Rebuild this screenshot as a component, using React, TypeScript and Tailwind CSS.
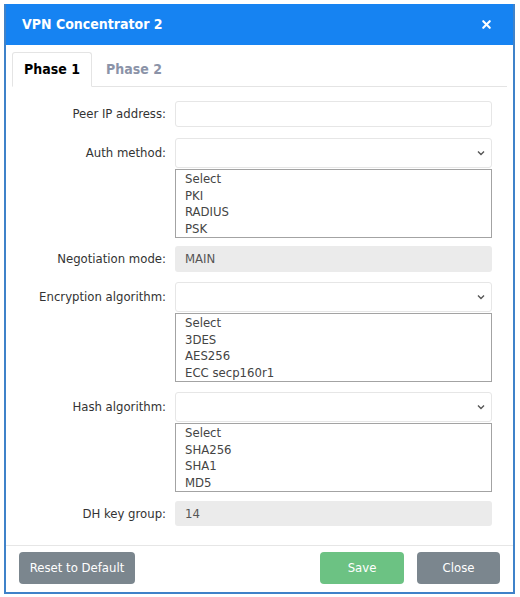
import { X } from 'lucide-react'

type ListProps = { items: string[] }

function Chevron() {
    return (
        <svg width="10" height="10" viewBox="0 0 10 10" className="text-[#555]">
            <path d="M2 3.5 L5 6.5 L8 3.5" fill="none" stroke="currentColor" strokeWidth="1.4" />
        </svg>
    )
}

function Row({ label, children, className = '', lh = 'leading-[26px]' }: { label: string; children: React.ReactNode; className?: string; lh?: string }) {
    return (
        <div className={`flex items-start ${className}`}>
            <div className={`w-[160px] shrink-0 text-right text-[13px] text-[#333] ${lh}`}>{label}</div>
            <div className="ml-[9px] w-[317px]">{children}</div>
        </div>
    )
}

function SelectBox() {
    return (
        <div className="flex h-[30px] items-center justify-end rounded-[3px] border border-[#e6e6e6] bg-white pr-[5px]">
            <Chevron />
        </div>
    )
}

function ListBox({ items }: ListProps) {
    return (
        <div className="mt-[1px] h-[69px] border border-[#a3a3a3] bg-white pl-[9px] pt-[1px] text-[13px] leading-[16.5px] text-[#444]">
            {items.map((it) => (
                <div key={it}>{it}</div>
            ))}
        </div>
    )
}

export default function App() {
    return (
        <div className="min-h-screen bg-white pt-[4px] pl-[4px]" style={{ fontFamily: '"DejaVu Sans Condensed", "Liberation Sans", sans-serif' }}>
            <div className="w-[511px] border-x-2 border-b-2 border-[#3f82c9] bg-white">
                <div className="flex h-[41px] items-center justify-between bg-[#1683f2] pl-[16px] pr-[20px]">
                    <span className="text-[14px] font-bold text-white">VPN Concentrator 2</span>
                    <X className="h-[13px] w-[13px] text-white" strokeWidth={4} />
                </div>

                <div className="mx-[6px] mt-[7px] flex border-b border-[#e4e4e4]">
                    <div className="-mb-px flex h-[35px] w-[80px] items-center justify-center rounded-t-[3px] border border-b-white border-[#e4e4e4] bg-white text-[14px] font-bold text-black">
                        Phase 1
                    </div>
                    <div className="flex h-[34px] w-[84px] items-center justify-center text-[14px] font-bold text-[#8b93a8]">
                        Phase 2
                    </div>
                </div>

                <div className="pt-[14px]">
                    <Row label="Peer IP address:">
                        <div className="h-[26px] rounded-[3px] border border-[#e6e6e6] bg-white" />
                    </Row>
                    <Row label="Auth method:" className="mt-[11px]" lh="leading-[30px]">
                        <SelectBox />
                        <ListBox items={['Select', 'PKI', 'RADIUS', 'PSK']} />
                    </Row>
                    <Row label="Negotiation mode:" className="mt-[8px]">
                        <div className="h-[26px] rounded-[3px] bg-[#ebebeb] pl-[10px] text-[13px] leading-[26px] text-[#555]">MAIN</div>
                    </Row>
                    <Row label="Encryption algorithm:" className="mt-[10px]" lh="leading-[30px]">
                        <SelectBox />
                        <ListBox items={['Select', '3DES', 'AES256', 'ECC secp160r1']} />
                    </Row>
                    <Row label="Hash algorithm:" className="mt-[10px]" lh="leading-[30px]">
                        <SelectBox />
                        <ListBox items={['Select', 'SHA256', 'SHA1', 'MD5']} />
                    </Row>
                    <Row label="DH key group:" className="mt-[9px]">
                        <div className="h-[25px] rounded-[3px] bg-[#ebebeb] pl-[10px] text-[13px] leading-[25px] text-[#555]">14</div>
                    </Row>
                </div>

                <div className="mt-[18px] flex items-center border-t border-[#e6e6e6] px-[13px] pt-[6px] pb-[8px]">
                    <button className="h-[32px] w-[116px] rounded-[4px] bg-[#7b868e] text-[13px] text-white">Reset to Default</button>
                    <div className="flex-1" />
                    <button className="h-[32px] w-[84px] rounded-[4px] bg-[#6cc283] text-[13px] text-white">Save</button>
                    <button className="ml-[13px] h-[32px] w-[83px] rounded-[4px] bg-[#7b868e] text-[13px] text-white">Close</button>
                </div>
            </div>
        </div>
    )
}
